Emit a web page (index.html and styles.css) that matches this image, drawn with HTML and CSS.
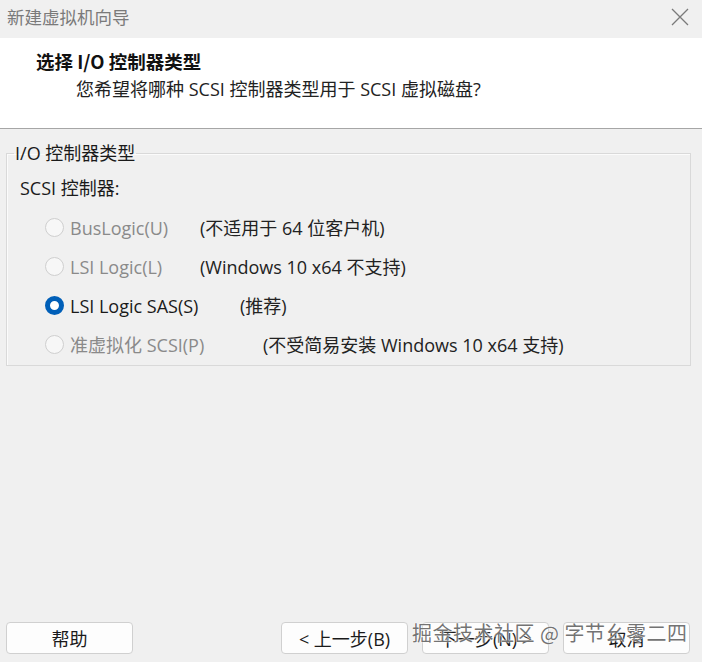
FILE: index.html
```html
<!DOCTYPE html>
<html lang="zh">
<head>
<meta charset="utf-8">
<title>新建虚拟机向导</title>
<link rel="stylesheet" href="styles.css">
</head>
<body>
<div class="window">
  <div class="titlebar">
    <span class="title">新建虚拟机向导</span>
    <svg class="close" width="18" height="18" viewBox="0 0 18 18"><path d="M1 1L17 17M17 1L1 17" stroke="#7a7a7a" stroke-width="1.3" fill="none"/></svg>
  </div>
  <div class="header">
    <div class="h-title">选择 I/O 控制器类型</div>
    <div class="h-sub">您希望将哪种 SCSI 控制器类型用于 SCSI 虚拟磁盘?</div>
  </div>
  <div class="main">
    <fieldset class="group">
      <legend>I/O 控制器类型</legend>
      <div class="sublabel">SCSI 控制器:</div>
      <div class="rows">
        <div class="row">
          <span class="radio"></span>
          <span class="lbl disabled w1">BusLogic(U)</span>
          <span class="desc">(不适用于 64 位客户机)</span>
        </div>
        <div class="row">
          <span class="radio"></span>
          <span class="lbl disabled w1">LSI Logic(L)</span>
          <span class="desc">(Windows 10 x64 不支持)</span>
        </div>
        <div class="row">
          <span class="radio checked"></span>
          <span class="lbl w2">LSI Logic SAS(S)</span>
          <span class="desc">(推荐)</span>
        </div>
        <div class="row">
          <span class="radio"></span>
          <span class="lbl disabled w3">准虚拟化 SCSI(P)</span>
          <span class="desc">(不受简易安装 Windows 10 x64 支持)</span>
        </div>
      </div>
    </fieldset>
  </div>
  <div class="footer">
    <button class="btn">帮助</button>
    <div class="spacer"></div>
    <button class="btn">&lt; 上一步(B)</button>
    <button class="btn">下一步(N) &gt;</button>
    <button class="btn">取消</button>
    <div class="watermark">掘金技术社区 @ 字节幺零二四</div>
  </div>
</div>
</body>
</html>
```
FILE: styles.css
```css
html, body {
  margin: 0;
  padding: 0;
  background: #f0f0f0;
}
body {
  font-family: "Open Sans", "Noto Sans CJK SC", sans-serif;
  font-size: 18px;
  color: #1a1a1a;
}
.window {
  width: 702px;
  height: 662px;
  display: flex;
  flex-direction: column;
  background: #f0f0f0;
}
.titlebar {
  height: 38px;
  display: flex;
  align-items: center;
  justify-content: space-between;
  padding: 0 13px 0 7px;
  background: #f0f0f0;
  box-sizing: border-box;
}
.title {
  color: #7a7a7a;
  font-family: "Noto Sans CJK SC", sans-serif;
  font-size: 17.5px;
  line-height: 22px;
  margin-top: -4px;
}
.close {
  margin-top: -4px;
}
.header {
  height: 91px;
  background: #ffffff;
  border-bottom: 1px solid #a6a6a6;
  box-sizing: border-box;
  padding-top: 11px;
}
.h-title {
  padding-left: 36px;
  font-family: "Noto Sans CJK SC", serif;
  font-weight: bold;
  font-size: 18.5px;
  line-height: 24px;
  color: #111;
}
.h-sub {
  padding-left: 76px;
  margin-top: 4px;
  font-family: "Open Sans", "Noto Sans CJK SC", sans-serif;
  font-size: 18px;
  line-height: 24px;
  color: #222;
}
.main {
  flex: 1;
  padding: 13px 11px 0 6px;
}
.group {
  margin: 0;
  padding: 0 0 1px 13px;
  border: 1px solid #d9d9d9;
  box-shadow: inset 1px 1px 0 #fbfbfb;
  min-width: 0;
}
.group legend {
  padding: 0 1px;
  margin-left: -6px;
  font-size: 18px;
  line-height: 22px;
  color: #1a1a1a;
}
.sublabel {
  margin-top: 13px;
  line-height: 22px;
}
.rows {
  margin-top: 9px;
}
.row {
  height: 39px;
  display: flex;
  align-items: center;
  padding-left: 25px;
}
.radio {
  width: 19px;
  height: 19px;
  border-radius: 50%;
  border: 1px solid #cfcfcf;
  background: #f7f7f7;
  box-sizing: border-box;
  margin-right: 6px;
  flex: none;
}
.radio.checked {
  background: #ffffff;
  border: 5.5px solid #005fb8;
}
.lbl {
  line-height: 22px;
  color: #1a1a1a;
}
.lbl.disabled {
  color: #8a8a8a;
}
.w1 { width: 130px; }
.w2 { width: 170px; }
.w3 { width: 193px; }
.desc {
  line-height: 22px;
  color: #222;
}
.footer {
  height: 40px;
  display: flex;
  align-items: flex-start;
  padding: 0 12px 0 6px;
  gap: 14px;
  position: relative;
}
.spacer {
  flex: 1;
}
.btn {
  width: 127px;
  height: 32px;
  background: #fdfdfd;
  border: 1px solid #d0d0d0;
  border-radius: 4px;
  font-family: "Open Sans", "Noto Sans CJK SC", sans-serif;
  font-size: 18px;
  color: #1a1a1a;
  padding: 0;
}
.watermark {
  position: absolute;
  left: 412px;
  top: -3px;
  font-family: "Noto Sans CJK SC", sans-serif;
  font-size: 20px;
  line-height: 28px;
  color: rgba(90, 90, 90, 0.85);
  text-shadow: 0 0 2px #fff, 0 0 1px #fff;
  letter-spacing: 0.5px;
}
```
